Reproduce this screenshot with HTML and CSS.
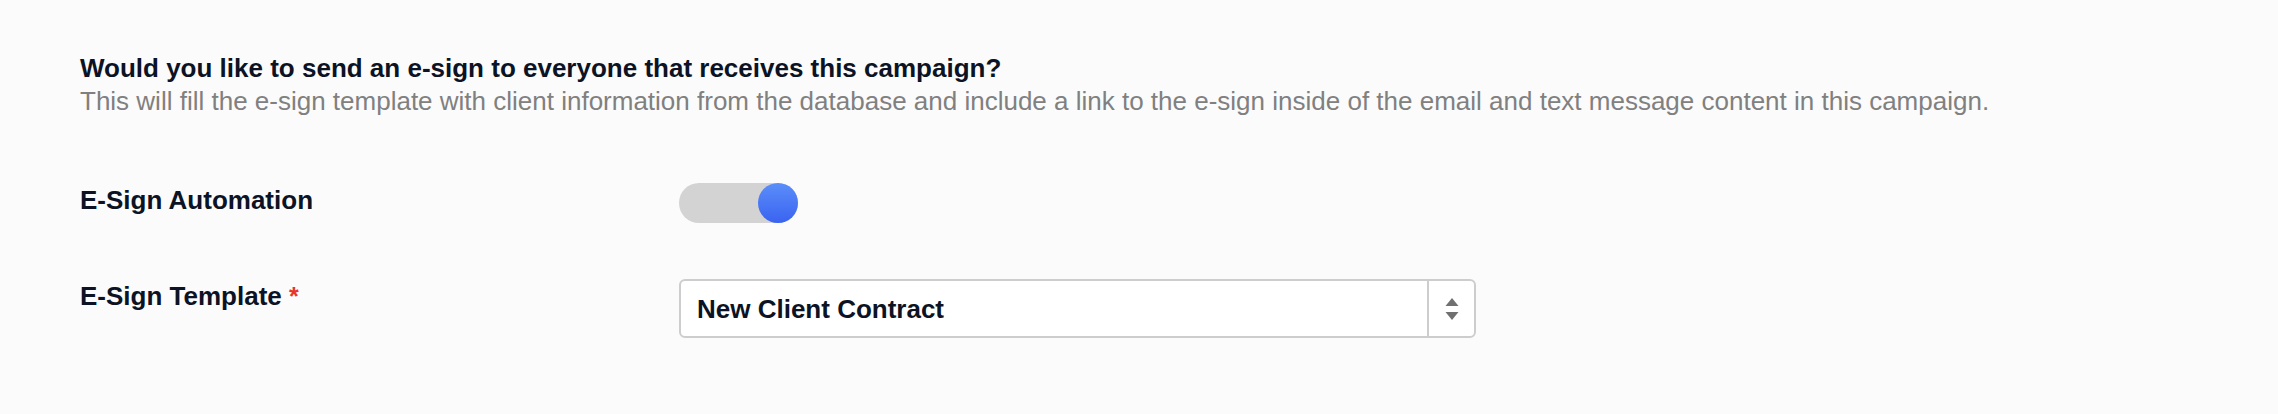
FILE: index.html
```html
<!DOCTYPE html>
<html>
<head>
  <title>E-Sign Settings</title>
  <link rel="stylesheet" href="styles.css">
</head>
<body>
  <div class="esign-section">
    <div class="intro">
      <div class="intro-title">Would you like to send an e-sign to everyone that receives this campaign?</div>
      <div class="intro-text">This will fill the e-sign template with client information from the database and include a link to the e-sign inside of the email and text message content in this campaign.</div>
    </div>

    <div class="field-row automation-row">
      <div class="field-label">E-Sign Automation</div>
      <div class="field-control">
        <div class="toggle on">
          <div class="toggle-knob"></div>
        </div>
      </div>
    </div>

    <div class="field-row">
      <div class="field-label">E-Sign Template <span class="required">*</span></div>
      <div class="field-control">
        <div class="select">
          <div class="select-value">New Client Contract</div>
          <div class="select-arrows">
            <svg width="14" height="22" viewBox="0 0 14 22">
              <path d="M7 0 L13.5 8 L0.5 8 Z" fill="#707070"/>
              <path d="M0.5 14 L13.5 14 L7 22 Z" fill="#707070"/>
            </svg>
          </div>
        </div>
      </div>
    </div>
  </div>
</body>
</html>
```

FILE: styles.css
```css
body {
  margin: 0;
  padding: 0;
  background: #fbfbfb;
  font-family: "Liberation Sans", Arial, sans-serif;
  color: #0b1324;
}

.esign-section {
  padding: 53px 80px 0;
}

.intro-title {
  font-size: 26px;
  font-weight: 700;
  line-height: 30px;
}

.intro-text {
  margin-top: 3px;
  font-size: 26px;
  line-height: 30px;
  color: #808080;
}

.field-row {
  display: flex;
  align-items: flex-start;
}

.automation-row {
  margin-top: 67px;
  margin-bottom: 56px;
}

.field-label {
  width: 599px;
  flex-shrink: 0;
  padding-top: 2px;
  font-size: 26px;
  font-weight: 700;
  line-height: 30px;
}

.required {
  color: #e8352c;
  font-size: 25px;
}

.toggle {
  display: flex;
  justify-content: flex-end;
  width: 119px;
  height: 40px;
  background: #d3d3d3;
  border-radius: 20px;
  cursor: pointer;
}

.toggle-knob {
  width: 40px;
  height: 40px;
  border-radius: 50%;
  background: linear-gradient(180deg, #5b8ef9 0%, #3a63f1 100%);
}

.select {
  display: flex;
  align-items: stretch;
  width: 797px;
  height: 59px;
  box-sizing: border-box;
  background: #fff;
  border: 2px solid #cdcdcd;
  border-radius: 6px;
}

.select-value {
  flex: 1;
  display: flex;
  align-items: center;
  padding-left: 16px;
  font-size: 26px;
  font-weight: 700;
  line-height: 30px;
}

.select-arrows {
  display: flex;
  align-items: center;
  justify-content: center;
  width: 45px;
  border-left: 2px solid #cdcdcd;
}
```
